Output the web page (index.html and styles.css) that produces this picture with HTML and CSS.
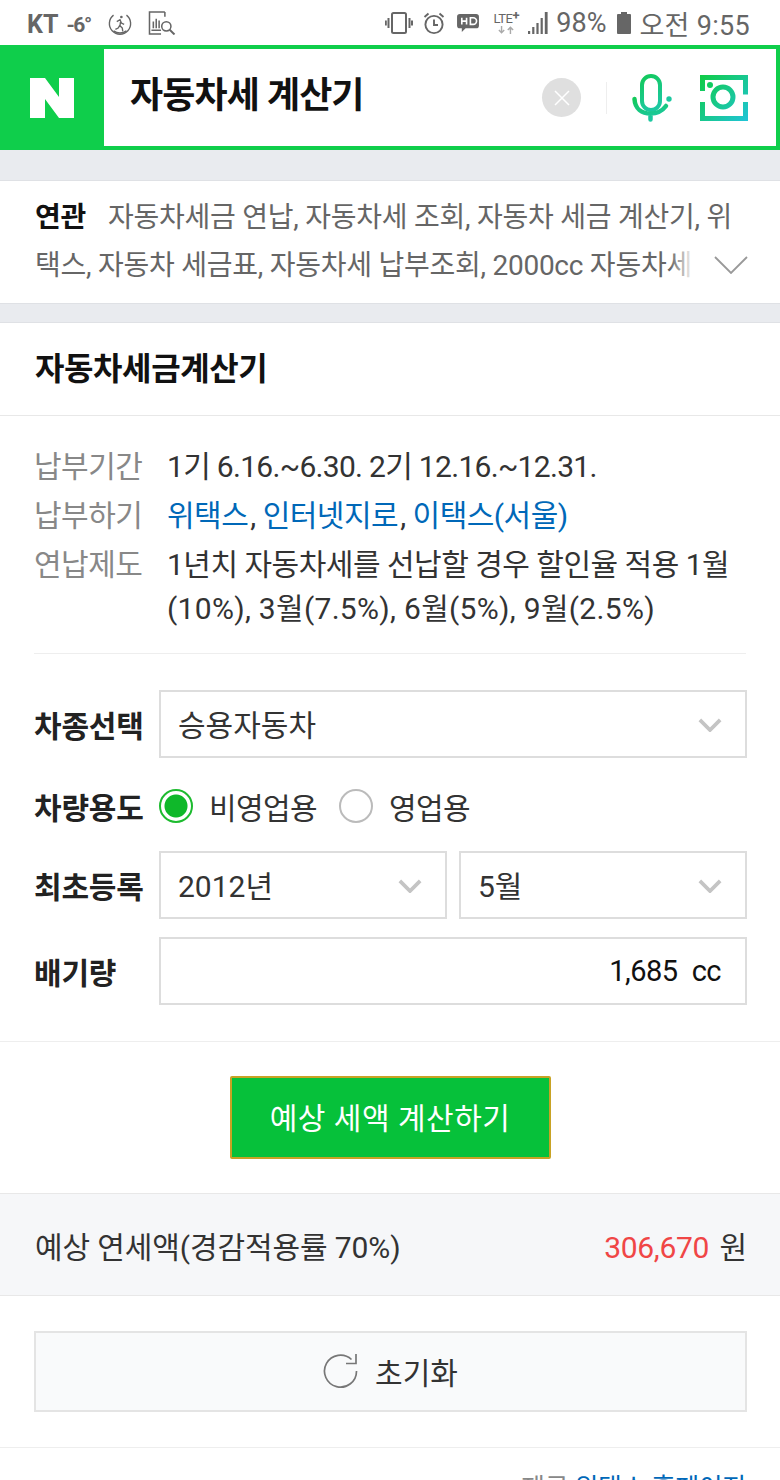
FILE: index.html
```html
<!DOCTYPE html>
<html lang="ko">
<head>
<meta charset="utf-8"/>
<meta content="width=device-width, initial-scale=1.0" name="viewport"/>
<title>자동차세 계산기</title>
<link rel="stylesheet" href="styles.css">
</head>
<body>
<div class="status">
  <div class="status-left">
    <span class="carrier">KT</span>
    <span class="temp">-6°</span>
    <svg class="ico-walk" width="24" height="24" viewBox="0 0 26 26" fill="none" stroke="#666" stroke-width="1.5"><path d="M20 4.5A11.5 11.5 0 1 1 6 4.5"/><path d="M6 21.5A11.5 11.5 0 0 0 20 21.5"/><circle cx="14.5" cy="6.5" r="1.4" fill="#666" stroke="none"/><path d="M9.5 11.5l3.5-2 1.5 3.5 3 1.5M13.5 12l-.5 4 2.5 2.5.5 3.5M12.8 15.500l-1.800 3-3 1.500"/></svg>
    <svg class="ico-chart" width="30" height="25" viewBox="0 0 30 26" fill="none" stroke="#666" stroke-width="1.6"><path d="M18 2H2v23h12"/><path d="M18 2v5"/><path d="M6 19v-7M9 19V9M12 19v-8M4 21h10"/><circle cx="19.500" cy="17" r="4.800"/><path d="M23 20.500l5 5" stroke-width="2"/></svg>
  </div>
  <div class="status-right">
    <svg class="ic-vib" width="28" height="24" viewBox="0 0 28 24" fill="none" stroke="#666" stroke-width="2"><rect x="7" y="2" width="14" height="20" rx="1.500"/><path d="M3.500 7v10M.8 9.500v5M24.500 7v10M27 9.500v5"/></svg>
    <svg class="ic-alarm" width="22" height="24" viewBox="0 0 22 24" fill="none" stroke="#666" stroke-width="1.900"><circle cx="11" cy="13.500" r="8.600"/><path d="M11 8.500v5.500h4M1.500 6l4-3.500M20.500 6l-4-3.500"/></svg>
    <svg class="ic-hd" width="24" height="20" viewBox="0 0 25 21"><path d="M4 1h17a3 3 0 0 1 3 3v9a3 3 0 0 1-3 3H10l-4 4v-4H4a3 3 0 0 1-3-3V4a3 3 0 0 1 3-3z" fill="#666"/><path d="M6 5v7M11 5v7M6 8.500h5M15 5v7h3a3.500 3.500 0 0 0 0-7z" fill="none" stroke="#fff" stroke-width="1.700"/></svg>
    <span class="lte"><span class="lte-top">LTE<sup>+</sup></span><svg width="20" height="8" viewBox="0 0 20 9" fill="none" stroke="#aaa" stroke-width="1.600"><path d="M5 0v7M2 4.500l3 3 3-3M15 9V2M12 4.500l3-3 3 3"/></svg></span>
    <svg class="ic-signal" width="23" height="24" viewBox="0 0 23 24" fill="#666"><rect x="0" y="20" width="2.200" height="3"/><rect x="4.200" y="16" width="2.200" height="7"/><rect x="8.400" y="12" width="2.200" height="11"/><rect x="12.600" y="7" width="2.200" height="16"/><rect x="16.800" y="1" width="2.800" height="22"/></svg>
    <span class="pct">98%</span>
    <svg class="ic-batt" width="16" height="24" viewBox="0 0 16 24" fill="#666"><path d="M5 1h6v2h3a1 1 0 0 1 1 1v18a1 1 0 0 1-1 1H2a1 1 0 0 1-1-1V4a1 1 0 0 1 1-1h3z"/></svg>
    <span class="clock">오전 9:55</span>
  </div>
</div>

<div class="searchbar">
  <div class="logo">
    <svg width="44" height="40" viewBox="0 0 44 40" fill="#fff"><path d="M0 0h15l14 19V0h15v40H29L15 21v19H0z"/></svg>
  </div>
  <div class="query">자동차세 계산기</div>
  <div class="clear">
    <svg width="16" height="16" viewBox="0 0 16 16" stroke="#fff" stroke-width="1.500"><path d="M1 1l14 14M15 1L1 15"/></svg>
  </div>
  <div class="vline"></div>
  <svg class="mic" width="40" height="48" viewBox="0 0 40 48" fill="none">
    <defs>
      <linearGradient id="micg" x1="0" y1="0" x2="0.300" y2="1"><stop offset="0" stop-color="#12c95a"/><stop offset="1" stop-color="#1cc8a0"/></linearGradient>
    </defs>
    <rect x="10" y="2" width="18" height="34" rx="9" stroke="url(#micg)" stroke-width="4"/>
    <path d="M2.500 25C3 35 10 39.500 18.500 39.500 26 39.500 31 36 34 32M18.500 39.500v6" stroke="url(#micg)" stroke-width="4.500" stroke-linecap="round"/>
    <circle cx="37" cy="25" r="2.700" fill="#1cc8a0"/>
  </svg>
  <svg class="lens" width="48" height="46" viewBox="0 0 48 46" fill="none">
    <defs>
      <linearGradient id="leng" gradientUnits="userSpaceOnUse" x1="0" y1="0" x2="48" y2="46"><stop offset="0" stop-color="#10cc44"/><stop offset="1" stop-color="#20c4d8"/></linearGradient>
    </defs>
    <path d="M2.500 16V2.500h43v17M2.500 27v16.500h43V27" stroke="url(#leng)" stroke-width="5"/>
    <circle cx="23" cy="22" r="10" stroke="url(#leng)" stroke-width="5"/>
    <circle cx="10" cy="10" r="3" fill="#12cc60"/>
  </svg>
</div>

<div class="band"></div>

<div class="related">
  <div class="related-line"><b>연관</b><span>자동차세금 연납, 자동차세 조회, 자동차 세금 계산기, 위</span></div>
  <div class="related-line">택스, 자동차 세금표, 자동차세 납부조회, 2000cc 자동차세</div>
  <div class="related-fade"></div>
  <svg class="related-arrow" width="34" height="18" viewBox="0 0 34 18" fill="none" stroke="#999" stroke-width="1.800"><path d="M1 1l16 16L33 1"/></svg>
</div>

<div class="band band-small"></div>

<div class="card">
  <h2 class="card-title">자동차세금계산기</h2>

  <dl class="info">
    <div class="info-row"><dt>납부기간</dt><dd class="tight">1기 6.16.~6.30. 2기 12.16.~12.31.</dd></div>
    <div class="info-row"><dt>납부하기</dt><dd><a>위택스</a>, <a>인터넷지로</a>, <a>이택스(서울)</a></dd></div>
    <div class="info-row"><dt>연납제도</dt><dd><span class="dd-line">1년치 자동차세를 선납할 경우 할인율 적용 1월</span><span class="dd-line wide">(10%), 3월(7.5%), 6월(5%), 9월(2.5%)</span></dd></div>
  </dl>

  <div class="form">
    <div class="form-row">
      <div class="label">차종선택</div>
      <div class="select">승용자동차<svg class="chev" width="24" height="14" viewBox="0 0 26 15" fill="none" stroke="#c4c4c4" stroke-width="4"><path d="M2 2l11 11L24 2"/></svg></div>
    </div>
    <div class="form-row radio-row">
      <div class="label">차량용도</div>
      <span class="radio on"></span><span class="radio-label">비영업용</span>
      <span class="radio"></span><span class="radio-label">영업용</span>
    </div>
    <div class="form-row">
      <div class="label">최초등록</div>
      <div class="select half">2012년<svg class="chev" width="24" height="14" viewBox="0 0 26 15" fill="none" stroke="#c4c4c4" stroke-width="4"><path d="M2 2l11 11L24 2"/></svg></div>
      <div class="select half">5월<svg class="chev" width="24" height="14" viewBox="0 0 26 15" fill="none" stroke="#c4c4c4" stroke-width="4"><path d="M2 2l11 11L24 2"/></svg></div>
    </div>
    <div class="form-row">
      <div class="label">배기량</div>
      <div class="select cc"><span>1,685</span><span class="unit">cc</span></div>
    </div>
  </div>

  <div class="calc-wrap"><div class="calc-btn">예상 세액 계산하기</div></div>

  <div class="result">
    <span>예상 연세액(경감적용률 70%)</span>
    <span class="amount"><em>306,670</em> 원</span>
  </div>

  <div class="reset-wrap">
    <div class="reset-btn">
      <svg width="36" height="36" viewBox="0 0 36 36" fill="none" stroke="#777" stroke-width="1.700"><path d="M28.500 6.500A16 16 0 1 0 33.500 18"/><path d="M33 1v9.500H23"/></svg>
      초기화
    </div>
  </div>

  <div class="source">제공 <a>위택스 홈페이지</a></div>
</div>
</body>
</html>
```

FILE: styles.css
```css
html, body {
    margin: 0;
    padding: 0;
}

body {
    width: 780px;
    height: 1480px;
    overflow: hidden;
    background: #fff;
    color: #222;
    font-family: "Roboto", "Noto Sans CJK KR", sans-serif;
}

/* status bar */
.status {
    height: 45px;
    padding: 0 30px 0 27px;
    display: flex;
    align-items: center;
    justify-content: space-between;
    color: #666;
}

.status-left, .status-right {
    display: flex;
    align-items: center;
}

.carrier {
    font-size: 25px;
    font-weight: 700;
    padding-top: 4px;
}

.temp {
    font-size: 21px;
    font-weight: 700;
    margin-left: 8px;
    letter-spacing: -1.4px;
    padding-top: 4px;
}

.ico-walk { margin-left: 17px; }
.ico-chart { margin-left: 15px; }

.ic-alarm { margin-left: 10px; }
.ic-hd { margin-left: 11px; margin-top: 1px; }

.lte {
    width: 28px;
    margin-left: 12px;
    display: flex;
    flex-direction: column;
    align-items: center;
    font-size: 13px;
    line-height: 14px;
    letter-spacing: -0.5px;
}

.lte-top { white-space: nowrap; }

.lte sup {
    font-size: 13px;
    font-weight: 700;
    line-height: 8px;
    vertical-align: top;
}

.ic-signal { margin-left: 8px; }

.pct {
    font-size: 27px;
    margin-left: 5px;
    margin-right: 1px;
    padding-top: 1px;
}

.ic-batt { margin-left: 9px; }

.clock {
    font-size: 27px;
    letter-spacing: 0.3px;
    margin-left: 7px;
    padding-top: 1px;
}

/* search box */
.searchbar {
    height: 105px;
    box-sizing: border-box;
    border: 4px solid #0fce4b;
    display: flex;
    align-items: center;
    padding-right: 28px;
}

.logo {
    width: 100px;
    height: 100%;
    padding-right: 4px;
    box-sizing: border-box;
    background: #0fce4b;
    display: flex;
    align-items: center;
    justify-content: center;
    flex-shrink: 0;
}

.query {
    flex: 1;
    margin-left: 26px;
    padding-bottom: 11px;
    font-size: 36px;
    font-weight: 700;
    color: #111;
    letter-spacing: -0.9px;
}

.clear {
    width: 39px;
    height: 39px;
    border-radius: 50%;
    background: #dfdfdf;
    display: flex;
    align-items: center;
    justify-content: center;
    margin-right: 25px;
}

.vline {
    width: 1px;
    height: 32px;
    background: #eee;
    margin-right: 25px;
}

.mic { margin-right: 28px; }

/* gray bands */
.band {
    height: 31px;
    background: #e9ebef;
    border-bottom: 1px solid #dfe1e5;
    box-sizing: border-box;
}

.band-small {
    height: 20px;
    border-top: 1px solid #dfe1e5;
    border-bottom: 1px solid #dfe1e5;
}

/* related searches */
.related {
    height: 122px;
    box-sizing: border-box;
    padding: 13px 0 0 35px;
    position: relative;
}

.related-line {
    font-size: 28px;
    line-height: 48px;
    height: 48px;
    white-space: nowrap;
    color: #666;
    letter-spacing: -0.25px;
}

.related-line b {
    color: #111;
    margin-right: 22px;
}

.related-fade {
    position: absolute;
    left: 670px;
    top: 61px;
    width: 24px;
    height: 48px;
    background: linear-gradient(to right, rgba(255, 255, 255, 0), #fff);
}

.related-arrow {
    position: absolute;
    right: 32px;
    top: 75px;
}

/* calculator card */
.card-title {
    margin: 0;
    height: 93px;
    box-sizing: border-box;
    padding: 0 35px 6px;
    border-bottom: 1px solid #e8e8e8;
    display: flex;
    align-items: center;
    font-size: 32px;
    font-weight: 700;
    letter-spacing: -0.4px;
    color: #111;
}

.info {
    margin: 0 34px;
    padding: 29px 0 17px;
    border-bottom: 1px solid #eee;
    font-size: 30px;
    line-height: 44px;
    letter-spacing: -0.5px;
}

.info-row {
    display: flex;
    margin-bottom: 5px;
}

.info dt {
    width: 133px;
    flex-shrink: 0;
    color: #888;
}

.info dd {
    margin: 0;
    color: #333;
}

.info dd.tight { letter-spacing: -0.7px; }

.dd-line {
    display: block;
    white-space: nowrap;
}

.dd-line.wide { letter-spacing: 0.3px; }

.info a, .source a {
    color: #0068b8;
}

.info a { margin-right: 2px; }

.form {
    padding: 36px 33px 36px 34px;
    border-bottom: 1px solid #eee;
    display: flex;
    flex-direction: column;
    gap: 18px;
}

.form-row {
    display: flex;
    align-items: center;
}

.label {
    width: 125px;
    flex-shrink: 0;
    font-size: 30px;
    font-weight: 700;
    letter-spacing: -0.2px;
    color: #222;
    white-space: nowrap;
}

.select {
    flex: 1;
    height: 68px;
    box-sizing: border-box;
    border: 2px solid #ddd;
    padding: 0 23px 3px 17px;
    display: flex;
    align-items: center;
    justify-content: space-between;
    font-size: 30px;
    color: #333;
}

.chev { margin-top: 5px; }

.half + .half { margin-left: 12px; }

.cc {
    justify-content: flex-end;
    font-size: 29px;
    letter-spacing: -0.5px;
    color: #111;
    padding: 0 24px 0 17px;
}

.unit { margin-left: 14px; }

.radio-row {
    height: 57px;
    box-sizing: border-box;
    padding-top: 3px;
}

.radio {
    width: 34px;
    height: 34px;
    box-sizing: border-box;
    border: 2px solid #bbb;
    border-radius: 50%;
    background: #fff;
    display: block;
    position: relative;
}

.radio.on {
    border-color: #1dbb2f;
    background: radial-gradient(circle, #0fb82a 0, #0fb82a 11px, #fff 12px);
}

.radio-label {
    font-size: 30px;
    letter-spacing: -0.6px;
    color: #333;
    margin: 0 22px 0 16px;
}

.calc-wrap {
    padding: 34px 0;
    display: flex;
    justify-content: center;
    border-bottom: 1px solid #e8e8e8;
}

.calc-btn {
    width: 321px;
    height: 83px;
    box-sizing: border-box;
    border: 2px solid #c8a224;
    border-radius: 2px;
    padding-bottom: 3px;
    background: #06c13a;
    color: #fff;
    display: flex;
    align-items: center;
    justify-content: center;
    font-size: 30px;
    letter-spacing: 0.5px;
}

.result {
    height: 102px;
    box-sizing: border-box;
    padding: 0 33px 0 35px;
    background: #f6f7f9;
    border-bottom: 1px solid #e8e8e8;
    display: flex;
    align-items: center;
    justify-content: space-between;
    font-size: 30px;
    letter-spacing: -0.1px;
    color: #333;
}

.amount em {
    font-style: normal;
    color: #f04646;
    margin-right: 3px;
    letter-spacing: -0.3px;
}

.reset-wrap {
    padding: 35px 33px 35px 34px;
    border-bottom: 1px solid #eee;
}

.reset-btn {
    height: 81px;
    box-sizing: border-box;
    border: 2px solid #e4e4e4;
    padding-bottom: 2px;
    background: #f9fafb;
    display: flex;
    align-items: center;
    justify-content: center;
    gap: 16px;
    font-size: 30px;
    color: #333;
}

.source {
    padding: 19px 34px 0;
    text-align: right;
    font-size: 26px;
    letter-spacing: -0.3px;
    color: #888;
}
```
